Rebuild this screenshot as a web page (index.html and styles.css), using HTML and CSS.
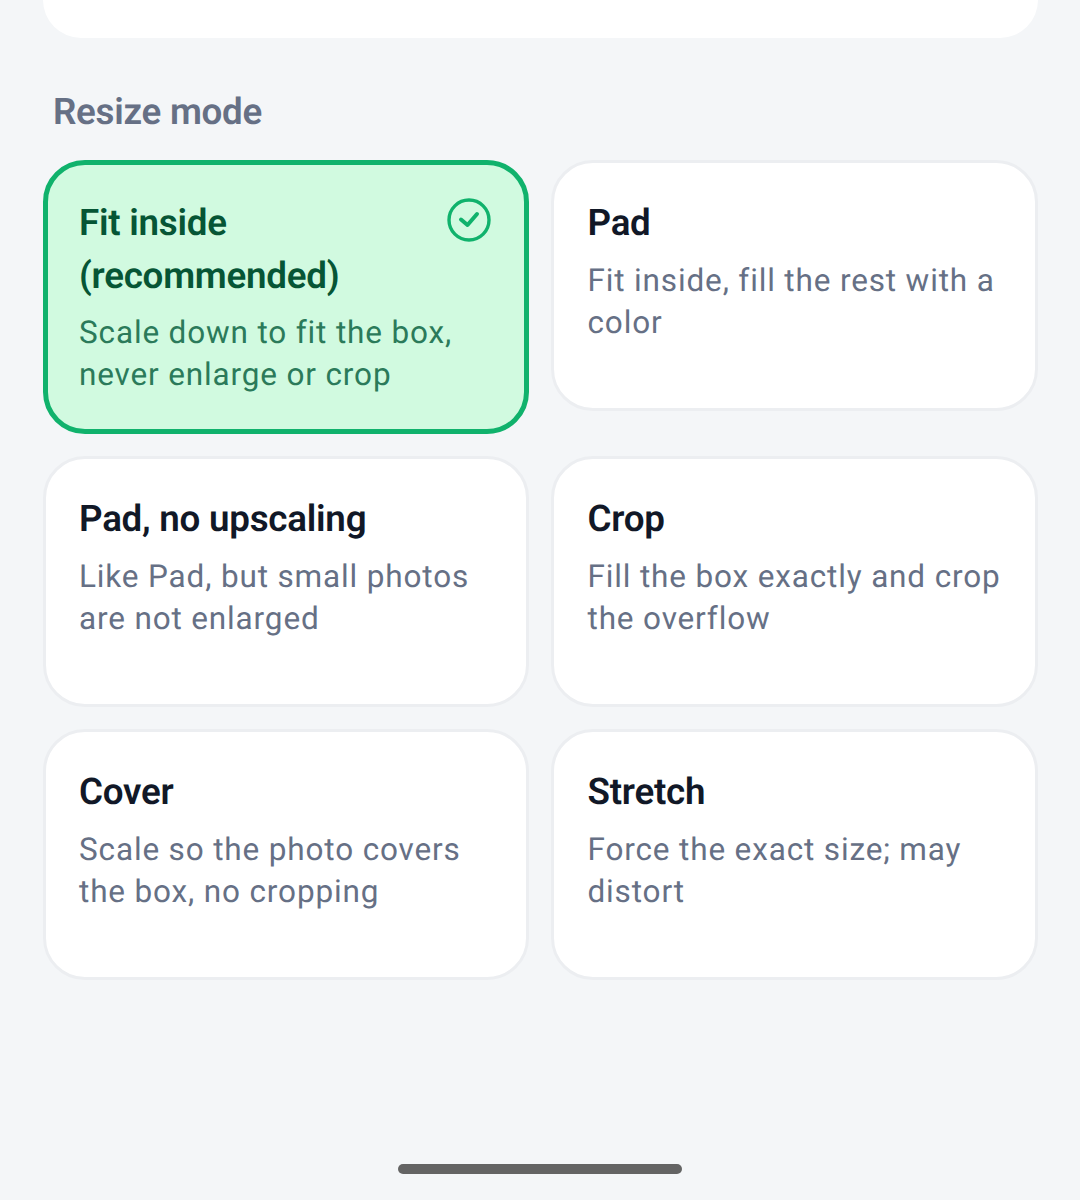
FILE: index.html
```html
<!DOCTYPE html>
<html lang="en">
<head>
  <meta charset="UTF-8" />
  <meta name="viewport" content="width=device-width, initial-scale=1.0"/>
  <title>Resize mode</title>
  <link rel="stylesheet" href="styles.css">
</head>
<body>
  <div class="screen">
    <div class="top-card"></div>
    <h2 class="section-label">Resize mode</h2>
    <div class="mode-grid">
      <div class="mode-card selected">
        <div class="mode-head">
          <h3 class="mode-title">Fit inside (recommended)</h3>
          <svg class="check-icon" viewBox="0 0 44 44" fill="none" stroke="#10b26c">
            <circle cx="22" cy="22" r="20" stroke-width="3.4"/>
            <path d="M14 21.5l6.5 5.5 9.5-11" stroke-width="4" stroke-linecap="round" stroke-linejoin="round"/>
          </svg>
        </div>
        <p class="mode-desc">Scale down to fit the box, never enlarge or crop</p>
      </div>
      <div class="mode-card">
        <h3 class="mode-title">Pad</h3>
        <p class="mode-desc">Fit inside, fill the rest with a color</p>
      </div>
      <div class="mode-card">
        <h3 class="mode-title">Pad, no upscaling</h3>
        <p class="mode-desc">Like Pad, but small photos are not enlarged</p>
      </div>
      <div class="mode-card">
        <h3 class="mode-title">Crop</h3>
        <p class="mode-desc">Fill the box exactly and crop the overflow</p>
      </div>
      <div class="mode-card">
        <h3 class="mode-title">Cover</h3>
        <p class="mode-desc">Scale so the photo covers the box, no cropping</p>
      </div>
      <div class="mode-card">
        <h3 class="mode-title">Stretch</h3>
        <p class="mode-desc">Force the exact size; may distort</p>
      </div>
    </div>
    <div class="home-bar"></div>
  </div>
</body>
</html>
```
FILE: styles.css
```css
html, body {
  margin: 0;
  padding: 0;
}

body {
  font-family: Roboto, 'Liberation Sans', sans-serif;
  background-color: #f4f6f8;
  text-rendering: geometricPrecision;
}

.screen {
  position: relative;
  height: 1200px;
  padding: 0 42.5px;
  box-sizing: border-box;
  overflow: hidden;
}

.top-card {
  height: 38px;
  background-color: #fff;
  border-radius: 0 0 42px 42px;
}

.section-label {
  margin: 52px 0 26.5px 10.5px;
  font-size: 36.75px;
  line-height: 43px;
  font-weight: 600;
  letter-spacing: -0.27px;
  color: #667085;
}

.mode-grid {
  display: grid;
  grid-template-columns: 1fr 1fr;
  gap: 22px;
  align-items: start;
}

.mode-card {
  min-height: 251px;
  padding: 33px 30px 26px 33.5px;
  box-sizing: border-box;
  background-color: #fff;
  border: 3px solid #eceef1;
  border-radius: 42px;
}

.mode-card.selected {
  padding: 31.5px 31.5px 32.5px 31.5px;
  background-color: #d1fae0;
  border: 5px solid #10b26c;
}

.mode-head {
  display: flex;
  justify-content: space-between;
  align-items: flex-start;
  gap: 26px;
}

.mode-title {
  margin: 0;
  font-size: 36.75px;
  line-height: 53px;
  font-weight: 600;
  letter-spacing: -0.25px;
  color: #111827;
}

.selected .mode-title {
  color: #065535;
}

.mode-desc {
  margin: 11px 0 0 0;
  font-size: 31.5px;
  line-height: 42px;
  letter-spacing: 0.85px;
  color: #667085;
}

.selected .mode-desc {
  margin-top: 10px;
  color: #2b7a5a;
}

.check-icon {
  flex: none;
  width: 44px;
  height: 44px;
  margin: 1.5px 1.5px 0 0;
}

/* gesture bar sits over the page bottom */
.home-bar {
  position: absolute;
  left: 398px;
  top: 1164px;
  width: 284px;
  height: 10px;
  border-radius: 5px;
  background-color: #646464;
}
```
